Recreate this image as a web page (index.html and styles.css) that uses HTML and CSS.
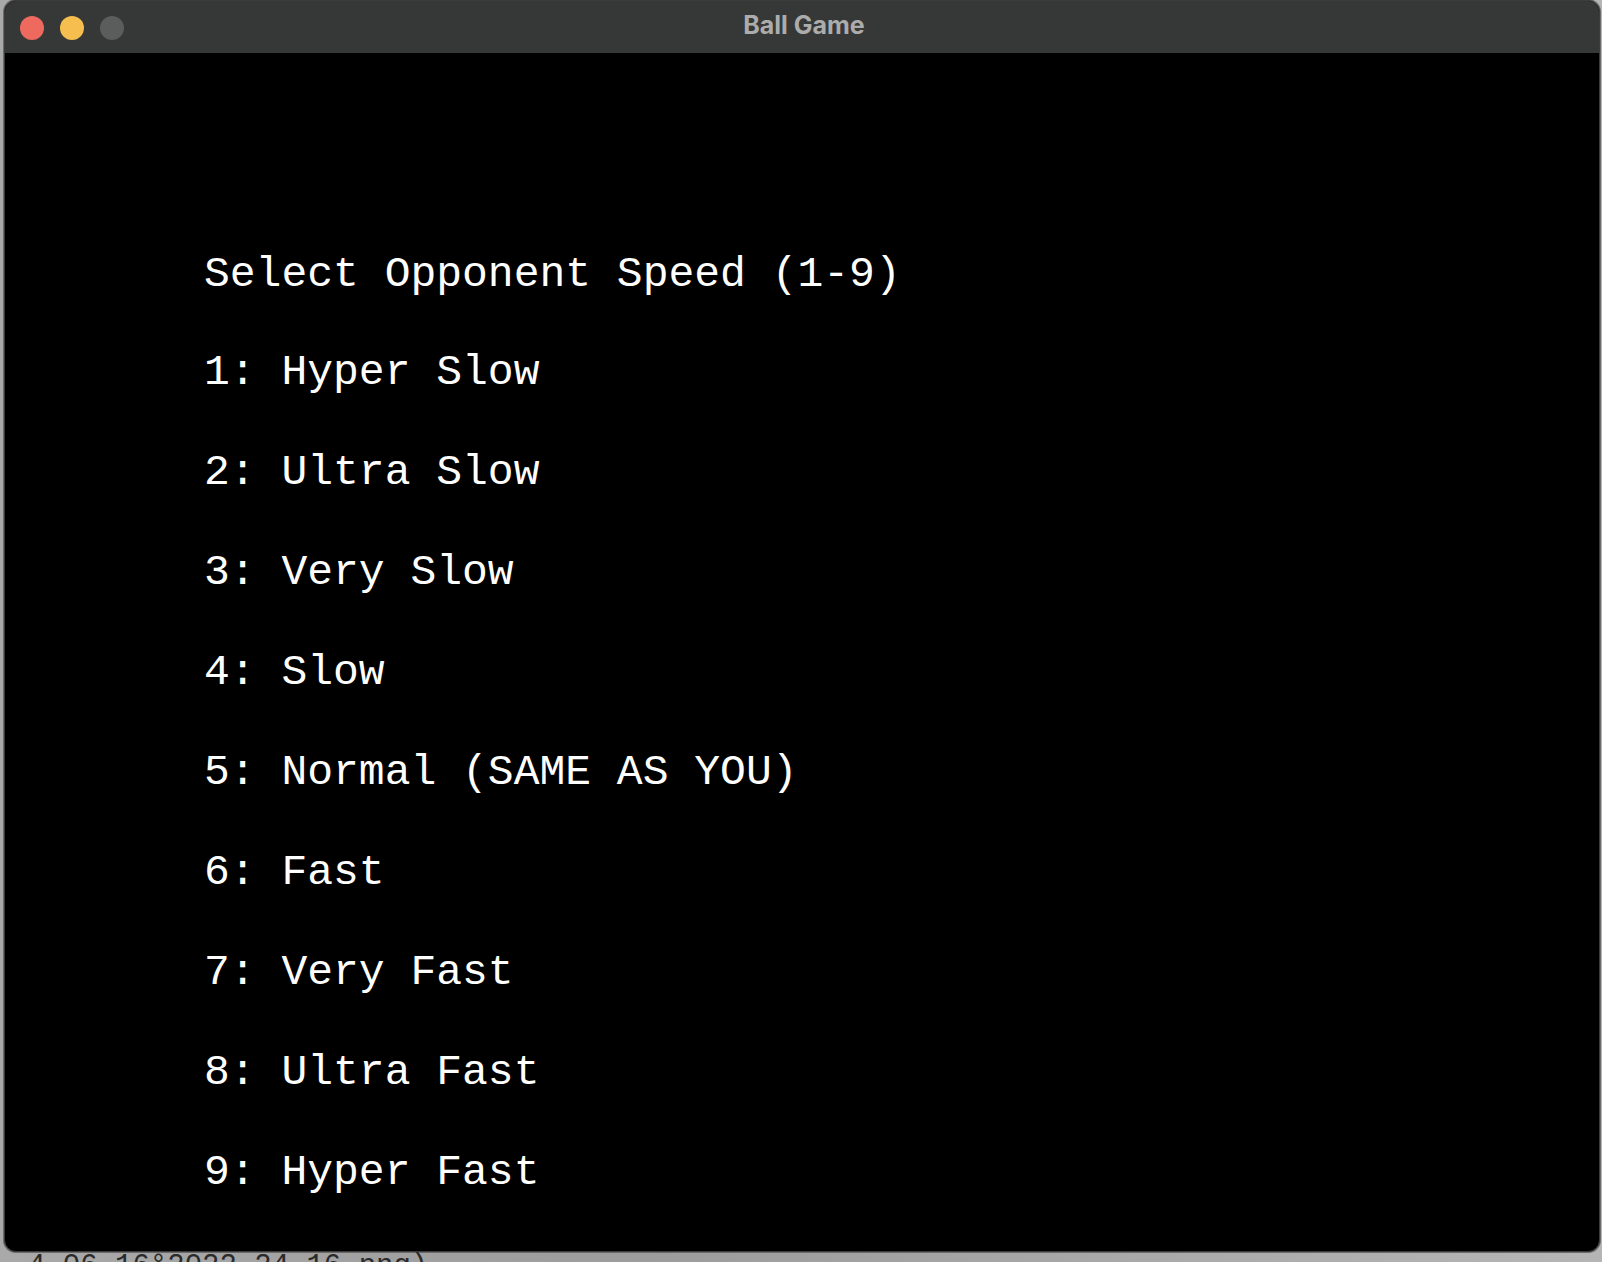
FILE: index.html
```html
<!DOCTYPE html>
<html lang="en">
<head>
<meta charset="utf-8">
<title>Ball Game</title>
<link rel="stylesheet" href="styles.css">
</head>
<body>
<div class="desktop">
  <div class="window">
    <div class="titlebar">
      <div class="lights">
        <span class="light red"></span>
        <span class="light yellow"></span>
        <span class="light gray"></span>
      </div>
      <div class="title">Ball Game</div>
    </div>
    <div class="screen">
      <div class="line heading">Select Opponent Speed (1-9)</div>
      <div class="line">1: Hyper Slow</div>
      <div class="line">2: Ultra Slow</div>
      <div class="line">3: Very Slow</div>
      <div class="line">4: Slow</div>
      <div class="line">5: Normal (SAME AS YOU)</div>
      <div class="line">6: Fast</div>
      <div class="line">7: Very Fast</div>
      <div class="line">8: Ultra Fast</div>
      <div class="line">9: Hyper Fast</div>
    </div>
  </div>
  <div class="caption">4-06 16°2022 24 16.png)</div>
</div>
</body>
</html>
```

FILE: styles.css
```css
html, body {
  margin: 0;
  padding: 0;
}

body {
  width: 1602px;
  height: 1262px;
  overflow: hidden;
  background: linear-gradient(90deg, #a9a9a9 0%, #9c9c9c 40%, #b5b5b5 100%);
}

.desktop {
  display: flex;
  flex-direction: column;
  height: 1262px;
}

.window {
  margin-left: 4px;
  width: 1596px;
  height: 1252px;
  flex: none;
  box-sizing: border-box;
  border: 1px solid #3c3c3c;
  border-radius: 12px;
  overflow: hidden;
  background: #000;
  display: flex;
  flex-direction: column;
  box-shadow: 0 0 0 1px #6a6a6a;
}

.titlebar {
  position: relative;
  height: 52px;
  flex: none;
  background: #363837;
  display: flex;
  align-items: center;
  padding-left: 15px;
}

.lights {
  display: flex;
  gap: 16px;
  margin-top: 1px;
}

.light {
  width: 24px;
  height: 24px;
  border-radius: 50%;
  display: block;
}

.red { background: #ee6a5f; }
.yellow { background: #f5be4f; }
.gray { background: #5b5d5c; }

.title {
  position: absolute;
  left: 0;
  right: 0;
  top: 0;
  bottom: 0;
  display: flex;
  align-items: center;
  justify-content: center;
  font-family: Inter, "Liberation Sans", sans-serif;
  font-weight: 700;
  font-size: 25px;
  color: #acacac;
  padding-left: 4px;
  padding-bottom: 4px;
}

.screen {
  flex: 1;
  padding-top: 170px;
  padding-left: 199px;
  font-family: "Liberation Mono", "Courier New", monospace;
  font-size: 43px;
  line-height: 100px;
  color: #fff;
}

.line {
  white-space: pre;
  height: 100px;
  box-sizing: border-box;
}

.line.heading {
  padding-top: 3px;
  line-height: 97px;
}

.caption {
  height: 10px;
  flex: none;
  overflow: hidden;
  padding-left: 28px;
  font-family: "Liberation Mono", monospace;
  font-size: 29px;
  line-height: 30px;
  color: #2a2a2a;
  white-space: pre;
}
```
